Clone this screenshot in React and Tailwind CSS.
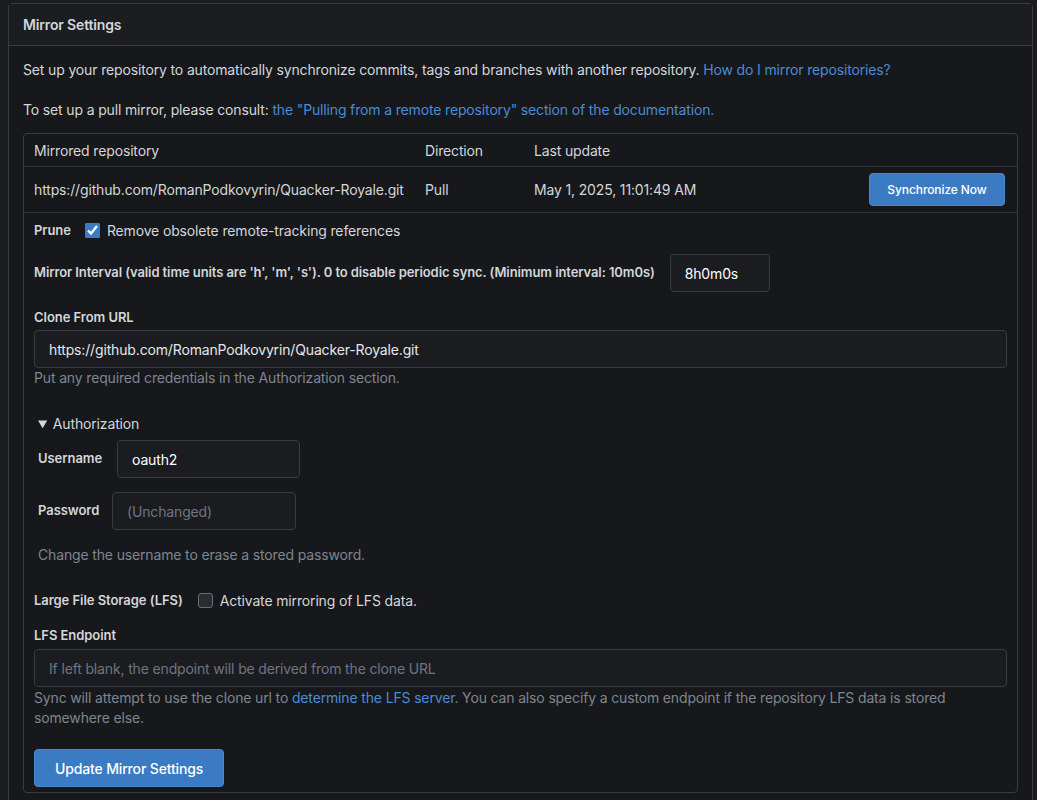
import { useState } from "react";

function Field({ className = "", ...props }) {
  return (
    <input
      {...props}
      className={
        "h-[38px] rounded-[4px] border border-[#383c42] bg-[#1b1c20] px-[14px] text-[14px] text-[#e6e7e9] placeholder:text-[#6f7580] focus:outline-none " +
        className
      }
    />
  );
}

export default function App() {
  const [prune, setPrune] = useState(true);
  const [lfs, setLfs] = useState(false);
  const [interval, setInterval] = useState("8h0m0s");
  const [url, setUrl] = useState("https://github.com/RomanPodkovyrin/Quacker-Royale.git");
  const [user, setUser] = useState("oauth2");

  return (
    <div className="min-h-screen bg-[#1a1c1f] pl-2 pr-[4px] pt-[3px] font-['Inter','Liberation_Sans',sans-serif] text-[14px] tracking-[-0.15px] text-[#d4d6da]">
      <div className="rounded-t-[4px] border border-[#383c41]">
        <h2 className="flex h-[42px] items-center border-b border-[#383c41] bg-[#1b1d20] px-[14px] text-[14px] font-semibold text-[#d4d6da]">
          Mirror Settings
        </h2>
        <div className="bg-[#16181b] px-[14px] pb-[6px] pt-[14px]">
          <p className="leading-[20px]">
            Set up your repository to automatically synchronize commits, tags and branches with another repository.{" "}
            <a className="text-[#4a8bd6]">How do I mirror repositories?</a>
          </p>
          <p className="mt-[20px] leading-[20px]">
            To set up a pull mirror, please consult:{" "}
            <a className="text-[#4a8bd6]">the "Pulling from a remote repository" section of the documentation.</a>
          </p>

          <div className="mt-[13px] rounded-[4px] border border-[#383c41]">
            <div className="flex h-[33px] items-center border-b border-[#2f3237] px-[10px]">
              <div className="w-[391px]">Mirrored repository</div>
              <div className="w-[109px]">Direction</div>
              <div>Last update</div>
            </div>
            <div className="flex h-[46px] items-center border-b border-[#2f3237] px-[10px]">
              <div className="w-[391px]">https://github.com/RomanPodkovyrin/Quacker-Royale.git</div>
              <div className="w-[109px]">Pull</div>
              <div className="flex-1">May 1, 2025, 11:01:49 AM</div>
              <button className="mr-[2px] h-[33px] w-[136px] rounded-[4px] border border-[#4a88d0] bg-[#3b7bc4] text-[12px] font-medium tracking-[-0.1px] text-white">
                Synchronize Now
              </button>
            </div>

            <div className="px-[10px] pb-[5px]">
              <div className="mt-[7px] flex items-center">
                <span className="text-[13px] font-semibold tracking-[-0.05px]">Prune</span>
                <label className="ml-[14px] flex items-center gap-[7px]">
                  <input
                    type="checkbox"
                    checked={prune}
                    onChange={() => setPrune(!prune)}
                    className="h-[15px] w-[15px] accent-[#3b7bc4]"
                  />
                  <span>Remove obsolete remote-tracking references</span>
                </label>
              </div>

              <div className="mt-[13px] flex items-center">
                <span className="text-[13px] font-semibold tracking-[-0.09px]">
                  Mirror Interval (valid time units are 'h', 'm', 's'). 0 to disable periodic sync. (Minimum interval: 10m0s)
                </span>
                <Field
                  value={interval}
                  onChange={(e) => setInterval(e.target.value)}
                  className="ml-[15px] w-[100px] text-white"
                />
              </div>

              <div className="mt-[16px] text-[13px] font-semibold leading-[18px] tracking-[-0.05px]">Clone From URL</div>
              <Field value={url} onChange={(e) => setUrl(e.target.value)} className="mt-[4px] w-full" />
              <p className="leading-[20px] text-[#7f8590]">Put any required credentials in the Authorization section.</p>

              <details open className="mt-[26px] pl-[4px]">
                <summary className="cursor-pointer leading-[20px]">Authorization</summary>
                <div className="mt-[6px] flex items-center">
                  <span className="w-[79px] text-[13px] font-semibold tracking-[-0.05px]">Username</span>
                  <Field value={user} onChange={(e) => setUser(e.target.value)} className="w-[183px] text-white" />
                </div>
                <div className="mt-[14px] flex items-center">
                  <span className="w-[74px] text-[13px] font-semibold tracking-[-0.05px]">Password</span>
                  <Field type="password" placeholder="(Unchanged)" className="w-[184px]" />
                </div>
                <p className="mt-[15px] leading-[20px] text-[#7f8590]">Change the username to erase a stored password.</p>
              </details>

              <div className="mt-[25px] flex items-center">
                <span className="text-[13px] font-semibold tracking-[-0.05px]">Large File Storage (LFS)</span>
                <label className="ml-[15px] flex items-center gap-[7px]">
                  <input
                    type="checkbox"
                    checked={lfs}
                    onChange={() => setLfs(!lfs)}
                    className="h-[15px] w-[15px] appearance-none rounded-[3px] border border-[#6a6e75] bg-[#2a2c30]"
                  />
                  <span>Activate mirroring of LFS data.</span>
                </label>
              </div>

              <div className="mt-[15px] text-[13px] font-semibold leading-[18px] tracking-[-0.05px]">LFS Endpoint</div>
              <Field placeholder="If left blank, the endpoint will be derived from the clone URL" className="mt-[5px] w-full" />
              <p className="mt-[1px] leading-[20px] text-[#7f8590]">
                Sync will attempt to use the clone url to <a className="text-[#4a8bd6]">determine the LFS server</a>. You can also specify a custom endpoint if the repository LFS data is stored somewhere else.
              </p>

              <button className="mt-[21px] h-[38px] rounded-[4px] border border-[#4a88d0] bg-[#3b7bc4] px-[20px] text-[14px] font-medium text-white">
                Update Mirror Settings
              </button>
            </div>
          </div>
          <div className="h-[40px]" />
        </div>
      </div>
    </div>
  );
}
